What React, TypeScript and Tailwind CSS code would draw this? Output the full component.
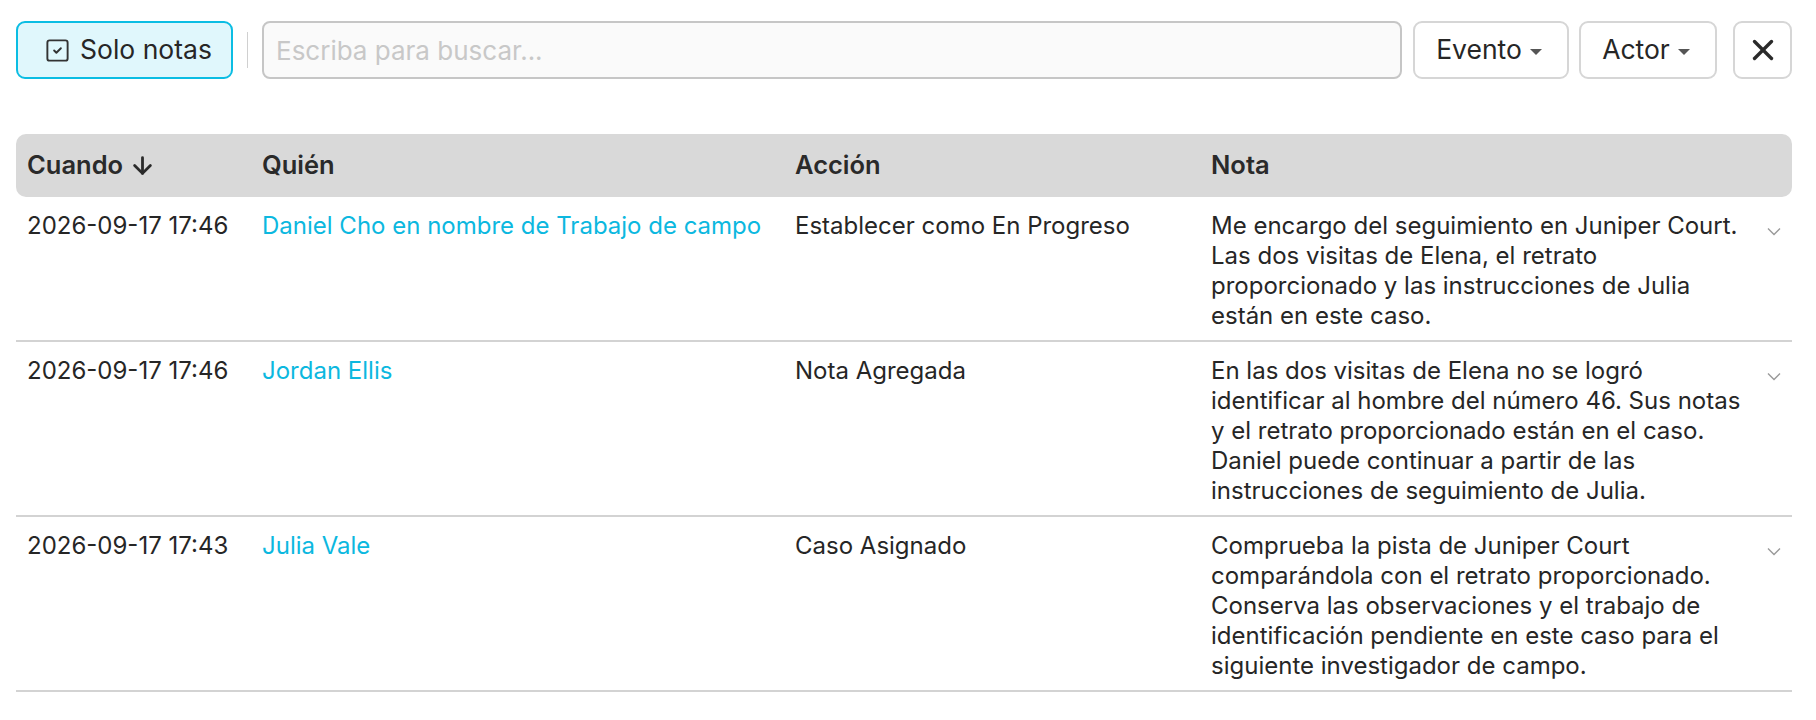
import React from 'react';
import { ArrowDown, SquareCheck, X } from 'lucide-react';

type Entry = {
  when: string;
  who: string;
  action: string;
  note: string[];
};

const entries: Entry[] = [
  {
    when: '2026-09-17 17:46',
    who: 'Daniel Cho en nombre de Trabajo de campo',
    action: 'Establecer como En Progreso',
    note: [
      'Me encargo del seguimiento en Juniper Court.',
      'Las dos visitas de Elena, el retrato',
      'proporcionado y las instrucciones de Julia',
      'están en este caso.',
    ],
  },
  {
    when: '2026-09-17 17:46',
    who: 'Jordan Ellis',
    action: 'Nota Agregada',
    note: [
      'En las dos visitas de Elena no se logró',
      'identificar al hombre del número 46. Sus notas',
      'y el retrato proporcionado están en el caso.',
      'Daniel puede continuar a partir de las',
      'instrucciones de seguimiento de Julia.',
    ],
  },
  {
    when: '2026-09-17 17:43',
    who: 'Julia Vale',
    action: 'Caso Asignado',
    note: [
      'Comprueba la pista de Juniper Court',
      'comparándola con el retrato proporcionado.',
      'Conserva las observaciones y el trabajo de',
      'identificación pendiente en este caso para el',
      'siguiente investigador de campo.',
    ],
  },
];

const Caret = () => (
  <svg width="12" height="6" viewBox="0 0 12 6" className="ml-[8px] mt-[4px]">
    <path d="M0 0 L12 0 L6 6 Z" fill="#555" />
  </svg>
);

const Chevron = () => (
  <svg width="14" height="9" viewBox="0 0 14 9" fill="none">
    <path d="M1 1.5 L7 7.5 L13 1.5" stroke="#9a9a9a" strokeWidth="1.4" />
  </svg>
);

export default function App() {
  return (
    <div className="bg-white min-h-screen pl-[16px] pr-[24px] pt-[21px] text-[#262626] font-['Inter',sans-serif]">
      {/* Toolbar */}
      <div className="flex items-center h-[58px]">
        <button className="flex items-center h-[58px] w-[217px] pl-[26px] rounded-[9px] border-2 border-[#0bbde3] bg-[#e0f7fc] text-[26.5px]">
          <SquareCheck size={27} strokeWidth={1.7} className="text-[#333]" />
          <span className="ml-[9px]">Solo notas</span>
        </button>
        <div className="w-px h-[36px] bg-[#d0d0d0] mx-[14px]" />
        <input
          type="text"
          placeholder="Escriba para buscar..."
          className="flex-1 h-[58px] rounded-[8px] border-2 border-[#c6c6c6] bg-[#fafafa] px-[12px] text-[26px] placeholder:text-[#c8c8c8] outline-none"
        />
        <button className="ml-[11px] flex items-center justify-center h-[58px] w-[156px] pr-[4px] rounded-[9px] border-2 border-[#d6d6d6] bg-white text-[26.5px]">
          Evento
          <Caret />
        </button>
        <button className="ml-[10px] flex items-center justify-center h-[58px] w-[138px] pr-[4px] rounded-[9px] border-2 border-[#d6d6d6] bg-white text-[26.5px]">
          Actor
          <Caret />
        </button>
        <button className="ml-[16px] flex items-center justify-center h-[58px] w-[59px] rounded-[9px] border-2 border-[#d6d6d6] bg-white">
          <X size={34} strokeWidth={2.4} className="text-[#2a2a2a]" />
        </button>
      </div>

      {/* Table */}
      <div className="mt-[55px]">
        <div className="grid grid-cols-[235px_533px_416px_1fr] items-center h-[63px] rounded-[10px] bg-[#d9d9d9] text-[25.5px] font-semibold text-[#2a2a2a]">
          <div className="pl-[11px] flex items-center">
            Cuando
            <ArrowDown size={27} strokeWidth={2.5} className="ml-[6px]" />
          </div>
          <div className="pl-[11px]">Quién</div>
          <div className="pl-[11px]">Acción</div>
          <div className="pl-[11px]">Nota</div>
        </div>

        {entries.map((e, i) => (
          <div
            key={i}
            className="grid grid-cols-[235px_533px_416px_1fr] pt-[14px] pb-[9px] border-b-2 border-[#d3d3d3] text-[24px] leading-[30px]"
          >
            <div className="pl-[11px]">{e.when}</div>
            <div className="pl-[11px] text-[#0cb8df]">{e.who}</div>
            <div className="pl-[11px]">{e.action}</div>
            <div className="pl-[11px] flex justify-between">
              <div>
                {e.note.map((line, j) => (
                  <div key={j} className="whitespace-nowrap">
                    {line}
                  </div>
                ))}
              </div>
              <div className="mt-[16px] mr-[11px]">
                <Chevron />
              </div>
            </div>
          </div>
        ))}
      </div>
    </div>
  );
}
